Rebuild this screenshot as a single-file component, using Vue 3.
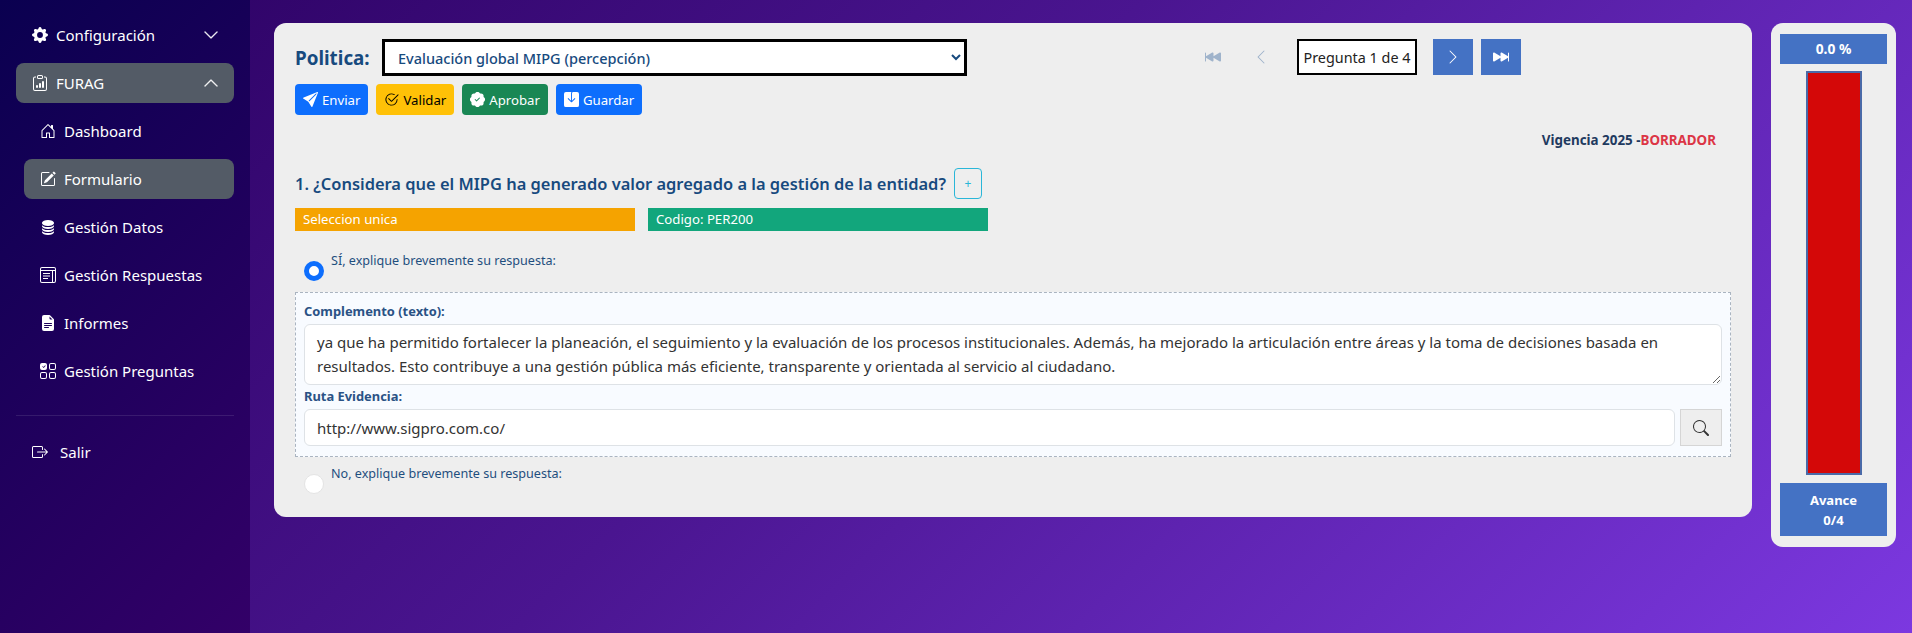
<script setup>
const icons = {
  gear: 'M9.405 1.05c-.413-1.4-2.397-1.4-2.81 0l-.1.34a1.464 1.464 0 0 1-2.105.872l-.31-.17c-1.283-.698-2.686.705-1.987 1.987l.169.311c.446.82.023 1.841-.872 2.105l-.34.1c-1.4.413-1.4 2.397 0 2.81l.34.1a1.464 1.464 0 0 1 .872 2.105l-.17.31c-.698 1.283.705 2.686 1.987 1.987l.311-.169a1.464 1.464 0 0 1 2.105.872l.1.34c.413 1.4 2.397 1.4 2.81 0l.1-.34a1.464 1.464 0 0 1 2.105-.872l.31.17c1.283.698 2.686-.705 1.987-1.987l-.169-.311a1.464 1.464 0 0 1 .872-2.105l.34-.1c1.4-.413 1.4-2.397 0-2.81l-.34-.1a1.464 1.464 0 0 1-.872-2.105l.17-.31c.698-1.283-.705-2.686-1.987-1.987l-.311.169a1.464 1.464 0 0 1-2.105-.872l-.1-.34zM8 10.93a2.929 2.929 0 1 1 0-5.86 2.929 2.929 0 0 1 0 5.858z',
  clip: 'M4 11a1 1 0 1 1 2 0v1a1 1 0 1 1-2 0v-1zm6-4a1 1 0 1 1 2 0v5a1 1 0 1 1-2 0V7zM7 9a1 1 0 0 1 2 0v3a1 1 0 1 1-2 0V9zM4 1.5H3a2 2 0 0 0-2 2V14a2 2 0 0 0 2 2h10a2 2 0 0 0 2-2V3.5a2 2 0 0 0-2-2h-1v1h1a1 1 0 0 1 1 1V14a1 1 0 0 1-1 1H3a1 1 0 0 1-1-1V3.5a1 1 0 0 1 1-1h1v-1zM9.5 1a.5.5 0 0 1 .5.5v1a.5.5 0 0 1-.5.5h-3a.5.5 0 0 1-.5-.5v-1a.5.5 0 0 1 .5-.5h3zm-3-1A1.5 1.5 0 0 0 5 1.5v1A1.5 1.5 0 0 0 6.5 4h3A1.5 1.5 0 0 0 11 2.5v-1A1.5 1.5 0 0 0 9.5 0h-3z',
  house: 'M8.354 1.146a.5.5 0 0 0-.708 0l-6 6A.5.5 0 0 0 1.5 7.5v7a.5.5 0 0 0 .5.5h4.5a.5.5 0 0 0 .5-.5v-4h2v4a.5.5 0 0 0 .5.5H14a.5.5 0 0 0 .5-.5v-7a.5.5 0 0 0-.146-.354L13 5.793V2.5a.5.5 0 0 0-.5-.5h-1a.5.5 0 0 0-.5.5v1.293L8.354 1.146zM2.5 14V7.707l5.5-5.5 5.5 5.5V14H10v-4a.5.5 0 0 0-.5-.5h-3a.5.5 0 0 0-.5.5v4H2.5z',
  pencil: 'M15.502 1.94a.5.5 0 0 1 0 .706L14.459 3.69l-2-2L13.502.646a.5.5 0 0 1 .707 0l1.293 1.293zm-1.75 2.456-2-2L4.939 9.21a.5.5 0 0 0-.121.196l-.805 2.414a.25.25 0 0 0 .316.316l2.414-.805a.5.5 0 0 0 .196-.12l6.813-6.814zM1 13.5A1.5 1.5 0 0 0 2.5 15h11a1.5 1.5 0 0 0 1.5-1.5v-6a.5.5 0 0 0-1 0v6a.5.5 0 0 1-.5.5h-11a.5.5 0 0 1-.5-.5v-11a.5.5 0 0 1 .5-.5H9a.5.5 0 0 0 0-1H2.5A1.5 1.5 0 0 0 1 2.5v11z',
  db: 'M3.904 1.777C4.978 1.289 6.427 1 8 1s3.022.289 4.096.777C13.125 2.245 14 2.993 14 4s-.875 1.755-1.904 2.223C11.022 6.711 9.573 7 8 7s-3.022-.289-4.096-.777C2.875 5.755 2 5.007 2 4s.875-1.755 1.904-2.223ZM2 6.161V7c0 1.007.875 1.755 1.904 2.223C4.978 9.71 6.427 10 8 10s3.022-.289 4.096-.777C13.125 8.755 14 8.007 14 7v-.839c-.457.432-1 .751-1.49.972C11.278 7.693 9.682 8 8 8s-3.278-.307-4.51-.867c-.49-.22-1.033-.54-1.49-.972ZM2 9.161V10c0 1.007.875 1.755 1.904 2.223C4.978 12.711 6.427 13 8 13s3.022-.289 4.096-.777C13.125 11.755 14 11.007 14 10v-.839c-.457.432-1 .751-1.49.972-1.232.56-2.828.867-4.51.867s-3.278-.307-4.51-.867c-.49-.22-1.033-.54-1.49-.972ZM2 12.161V13c0 1.007.875 1.755 1.904 2.223C4.978 15.711 6.427 16 8 16s3.022-.289 4.096-.777C13.125 14.755 14 14.007 14 13v-.839c-.457.432-1 .751-1.49.972-1.232.56-2.828.867-4.51.867s-3.278-.307-4.51-.867c-.49-.22-1.033-.54-1.49-.972Z',
  layout: 'M2 0h12a2 2 0 0 1 2 2v12a2 2 0 0 1-2 2H2a2 2 0 0 1-2-2V2a2 2 0 0 1 2-2zm0 1a1 1 0 0 0-1 1v1h14V2a1 1 0 0 0-1-1H2zM1 4v10a1 1 0 0 0 1 1h10V4H1zm12 0v11h1a1 1 0 0 0 1-1V4h-2zM3 6h7v1H3V6zm0 2.500h7v1H3v-1zM3 11h5v1H3v-1z',
  file: 'M9.293 0H4a2 2 0 0 0-2 2v12a2 2 0 0 0 2 2h8a2 2 0 0 0 2-2V4.707A1 1 0 0 0 13.707 4L10 .293A1 1 0 0 0 9.293 0zM9.500 3.500v-2l3 3h-2a1 1 0 0 1-1-1zM4.500 9a.5.5 0 0 1 0-1h7a.5.5 0 0 1 0 1h-7zM4 10.500a.5.5 0 0 1 .5-.5h7a.5.5 0 0 1 0 1h-7a.5.5 0 0 1-.5-.5zm.5 2.500a.5.5 0 0 1 0-1h4a.5.5 0 0 1 0 1h-4z',
  grid: 'M2 0h3a2 2 0 0 1 2 2v3a2 2 0 0 1-2 2H2a2 2 0 0 1-2-2V2a2 2 0 0 1 2-2zm1.700 5 2-2.300-.6-.5-1.500 1.700-.8-.8-.5.5 1.400 1.400zM11 0h3a2 2 0 0 1 2 2v3a2 2 0 0 1-2 2h-3a2 2 0 0 1-2-2V2a2 2 0 0 1 2-2zm0 1a1 1 0 0 0-1 1v3a1 1 0 0 0 1 1h3a1 1 0 0 0 1-1V2a1 1 0 0 0-1-1h-3zM2 9h3a2 2 0 0 1 2 2v3a2 2 0 0 1-2 2H2a2 2 0 0 1-2-2v-3a2 2 0 0 1 2-2zm0 1a1 1 0 0 0-1 1v3a1 1 0 0 0 1 1h3a1 1 0 0 0 1-1v-3a1 1 0 0 0-1-1H2zm9-1h3a2 2 0 0 1 2 2v3a2 2 0 0 1-2 2h-3a2 2 0 0 1-2-2v-3a2 2 0 0 1 2-2zm0 1a1 1 0 0 0-1 1v3a1 1 0 0 0 1 1h3a1 1 0 0 0 1-1v-3a1 1 0 0 0-1-1h-3z',
  exit: 'M10 12.500a.5.5 0 0 1-.5.5h-8a.5.5 0 0 1-.5-.5v-9a.5.5 0 0 1 .5-.5h8a.5.5 0 0 1 .5.5v2a.5.5 0 0 0 1 0v-2A1.500 1.500 0 0 0 9.500 2h-8A1.500 1.500 0 0 0 0 3.500v9A1.500 1.500 0 0 0 1.500 14h8a1.500 1.500 0 0 0 1.500-1.500v-2a.5.5 0 0 0-1 0v2zM15.854 8.354a.5.5 0 0 0 0-.708l-3-3a.5.5 0 0 0-.708.708L14.293 7.500H5.500a.5.5 0 0 0 0 1h8.793l-2.147 2.146a.5.5 0 0 0 .708.708l3-3z',
  send: 'M15.964.686a.5.5 0 0 0-.65-.65L.767 5.855H.766l-.452.18a.5.5 0 0 0-.082.887l.41.26.001.002 4.995 3.178 3.178 4.995.002.002.26.41a.5.5 0 0 0 .886-.083l6-15Zm-1.833 1.890L6.637 10.070l-.215-.338a.5.5 0 0 0-.154-.154l-.338-.215 7.494-7.494 1.178-.471-.47 1.178Z',
  check: 'M2.500 8a5.500 5.500 0 0 1 8.250-4.764.5.5 0 0 0 .5-.866A6.500 6.500 0 1 0 14.500 8a.5.5 0 0 0-1 0 5.500 5.500 0 1 1-11 0zM15.354 3.354a.5.5 0 0 0-.708-.708L8 9.293 5.354 6.646a.5.5 0 1 0-.708.708l3 3a.5.5 0 0 0 .708 0l7-7z',
  patch: 'M10.067.87a2.89 2.89 0 0 0-4.134 0l-.622.638-.89-.011a2.89 2.89 0 0 0-2.924 2.924l.01.89-.636.622a2.89 2.89 0 0 0 0 4.134l.637.622-.011.89a2.89 2.89 0 0 0 2.924 2.924l.89-.01.622.636a2.89 2.89 0 0 0 4.134 0l.622-.637.89.011a2.89 2.89 0 0 0 2.924-2.924l-.01-.89.636-.622a2.89 2.89 0 0 0 0-4.134l-.637-.622.011-.89a2.89 2.89 0 0 0-2.924-2.924l-.89.01-.622-.636zm.287 5.984-3 3a.5.5 0 0 1-.708 0l-1.500-1.500a.5.5 0 1 1 .708-.708L7 8.793l2.646-2.647a.5.5 0 0 1 .708.708z',
  save: 'M8.500 1.500A1.500 1.500 0 0 1 10 0h4a2 2 0 0 1 2 2v12a2 2 0 0 1-2 2H2a2 2 0 0 1-2-2V2a2 2 0 0 1 2-2h6c-.314.418-.5.937-.5 1.500v7.793L4.854 6.646a.5.5 0 1 0-.708.708l3.500 3.500a.5.5 0 0 0 .708 0l3.500-3.500a.5.5 0 0 0-.708-.708L8.500 9.293V1.500z',
  first: 'M.5 3.500A.5.5 0 0 0 0 4v8a.5.5 0 0 0 1 0V8.753l6.267 3.636c.54.313 1.233-.066 1.233-.697v-2.940l6.267 3.636c.54.314 1.233-.065 1.233-.696V4.308c0-.63-.693-1.010-1.233-.696L8.500 7.248v-2.940c0-.63-.692-1.010-1.233-.696L1 7.248V4a.5.5 0 0 0-.5-.5z',
  last: 'M15.500 3.500a.5.5 0 0 1 .5.5v8a.5.5 0 0 1-1 0V8.753l-6.267 3.636c-.54.313-1.233-.066-1.233-.697v-2.940l-6.267 3.636C.693 12.703 0 12.324 0 11.693V4.308c0-.63.693-1.010 1.233-.696L7.500 7.248v-2.940c0-.63.693-1.010 1.233-.696L15 7.248V4a.5.5 0 0 1 .5-.5z',
  left: 'M11.354 1.646a.5.5 0 0 1 0 .708L5.707 8l5.647 5.646a.5.5 0 0 1-.708.708l-6-6a.5.5 0 0 1 0-.708l6-6a.5.5 0 0 1 .708 0z',
  right: 'M4.646 1.646a.5.5 0 0 1 .708 0l6 6a.5.5 0 0 1 0 .708l-6 6a.5.5 0 0 1-.708-.708L10.293 8 4.646 2.354a.5.5 0 0 1 0-.708z',
  down: 'M1.646 4.646a.5.5 0 0 1 .708 0L8 10.293l5.646-5.647a.5.5 0 0 1 .708.708l-6 6a.5.5 0 0 1-.708 0l-6-6a.5.5 0 0 1 0-.708z',
  up: 'M7.646 4.646a.5.5 0 0 1 .708 0l6 6a.5.5 0 0 1-.708.708L8 5.707l-5.646 5.647a.5.5 0 0 1-.708-.708l6-6z',
  search: 'M11.742 10.344a6.500 6.500 0 1 0-1.397 1.398h-.001c.03.04.062.078.098.115l3.850 3.850a1 1 0 0 0 1.415-1.414l-3.850-3.850a1.007 1.007 0 0 0-.115-.1zM12 6.500a5.500 5.500 0 1 1-11 0 5.500 5.500 0 0 1 11 0z'
}
const subItems = [
  { label: 'Dashboard', icon: 'house' },
  { label: 'Formulario', icon: 'pencil', active: true },
  { label: 'Gestión Datos', icon: 'db' },
  { label: 'Gestión Respuestas', icon: 'layout' },
  { label: 'Informes', icon: 'file' },
  { label: 'Gestión Preguntas', icon: 'grid' }
]
const actions = [
  { label: 'Enviar', icon: 'send', cls: 'blue' },
  { label: 'Validar', icon: 'check', cls: 'yellow' },
  { label: 'Aprobar', icon: 'patch', cls: 'green' },
  { label: 'Guardar', icon: 'save', cls: 'blue' }
]
const complemento = 'ya que ha permitido fortalecer la planeación, el seguimiento y la evaluación de los procesos institucionales. Además, ha mejorado la articulación entre áreas y la toma de decisiones basada en resultados. Esto contribuye a una gestión pública más eficiente, transparente y orientada al servicio al ciudadano.'
</script>

<template>
  <div class="page">
    <aside class="sidebar">
      <nav class="menu">
        <a class="top-item">
          <svg class="ico" viewBox="0 0 16 16"><path :d="icons.gear" /></svg>
          <span>Configuración</span>
          <svg class="chev" viewBox="0 0 16 16"><path :d="icons.down" /></svg>
        </a>
        <a class="top-item open">
          <svg class="ico" viewBox="0 0 16 16"><path :d="icons.clip" /></svg>
          <span>FURAG</span>
          <svg class="chev" viewBox="0 0 16 16"><path :d="icons.up" /></svg>
        </a>
        <a v-for="it in subItems" :key="it.label" class="sub-item" :class="{ active: it.active }">
          <svg class="ico" viewBox="0 0 16 16"><path :d="icons[it.icon]" /></svg>
          <span>{{ it.label }}</span>
        </a>
      </nav>
      <hr class="divider" />
      <a class="logout">
        <svg class="ico" viewBox="0 0 16 16"><path :d="icons.exit" /></svg>
        <span>Salir</span>
      </a>
    </aside>

    <main class="content">
      <section class="card">
        <div class="head-row">
          <div class="head-left">
            <div class="politica">
              <label class="pol-label">Politica:</label>
              <select class="pol-select">
                <option>Evaluación global MIPG (percepción)</option>
              </select>
            </div>
            <div class="actions">
              <button v-for="a in actions" :key="a.label" class="act" :class="a.cls">
                <svg class="act-ico" viewBox="0 0 16 16"><path :d="icons[a.icon]" /></svg>
                {{ a.label }}
              </button>
            </div>
          </div>
          <div class="pager">
            <button class="pg ghost"><svg viewBox="0 0 16 16"><path :d="icons.first" /></svg></button>
            <button class="pg ghost"><svg viewBox="0 0 16 16"><path :d="icons.left" /></svg></button>
            <div class="pg-count">Pregunta 1 de 4</div>
            <button class="pg solid"><svg viewBox="0 0 16 16"><path :d="icons.right" /></svg></button>
            <button class="pg solid"><svg viewBox="0 0 16 16"><path :d="icons.last" /></svg></button>
          </div>
        </div>

        <div class="vigencia">Vigencia 2025 -<span class="borrador">BORRADOR</span></div>

        <div class="question">
          <h2>1. ¿Considera que el MIPG ha generado valor agregado a la gestión de la entidad?</h2>
          <button class="plus">+</button>
        </div>

        <div class="tags">
          <span class="tag orange">Seleccion unica</span>
          <span class="tag teal">Codigo: PER200</span>
        </div>

        <label class="option first">
          <input type="radio" name="r" checked />
          <span>SÍ, explique brevemente su respuesta:</span>
        </label>

        <div class="extra">
          <label class="field-label">Complemento (texto):</label>
          <textarea class="area" :value="complemento"></textarea>
          <label class="field-label second">Ruta Evidencia:</label>
          <div class="evid">
            <input class="url" type="text" value="http://www.sigpro.com.co/" />
            <button class="find"><svg viewBox="0 0 16 16"><path :d="icons.search" /></svg></button>
          </div>
        </div>

        <label class="option">
          <input type="radio" name="r" />
          <span>No, explique brevemente su respuesta:</span>
        </label>
      </section>

      <aside class="progress">
        <div class="pct">0.0 %</div>
        <div class="bar"></div>
        <div class="avance">Avance<br />0/4</div>
      </aside>
    </main>
  </div>
</template>

<style>
body { margin: 0; }
</style>

<style scoped>
.page {
  display: flex;
  min-height: 633px;
  background: linear-gradient(135deg, #2a0060 0%, #4a1590 45%, #7c38e0 100%);
  font-family: "Noto Sans", "Open Sans", sans-serif;
  overflow: hidden;
}
.sidebar {
  width: 250px;
  flex: none;
  box-sizing: border-box;
  padding: 15px 16px 0;
  background: linear-gradient(135deg, #0a0050 0%, #330068 100%);
  color: #fff;
  font-size: 15px;
}
.menu { display: flex; flex-direction: column; gap: 8px; }
.top-item, .sub-item {
  display: flex;
  align-items: center;
  height: 40px;
  border-radius: 8px;
  color: #fff;
}
.top-item { padding: 0 16px; }
.top-item .ico { margin-right: 8px; }
.top-item.open, .sub-item.active { background: #535b66; }
.sub-item { margin-left: 8px; padding: 0 16px; }
.sub-item .ico { margin-right: 8px; }
.ico { width: 16px; height: 16px; fill: currentColor; flex: none; }
.chev { width: 16px; height: 16px; fill: currentColor; margin-left: auto; margin-right: -1px; stroke: currentColor; stroke-width: 0.4; }
.divider {
  border: 0;
  height: 1px;
  background: rgba(255, 255, 255, 0.1);
  margin: 24px 0 15px;
}
.logout { display: flex; align-items: center; height: 42px; padding-left: 16px; gap: 12px; }

.content {
  flex: 1;
  display: flex;
  align-items: flex-start;
  gap: 19px;
  padding: 23px 16px 0 24px;
  min-width: 0;
}
.card {
  flex: 1;
  min-width: 0;
  box-sizing: border-box;
  height: 494px;
  background: #eeeeee;
  border-radius: 12px;
  padding: 16px 21px 0;
}
.head-row { display: flex; justify-content: space-between; }
.head-left { display: flex; flex-direction: column; gap: 8px; }
.politica { display: flex; align-items: center; gap: 13px; }
.pol-label { color: #174a7e; font-size: 18.8px; font-weight: 700; width: 74px; white-space: nowrap; }
.pol-select {
  width: 585px;
  height: 37px;
  box-sizing: border-box;
  border: 3px solid #000;
  background: #fff;
  color: #174a7e;
  font: 500 14.5px "Noto Sans", sans-serif;
  padding-left: 9px;
  border-radius: 0;
}
.actions { display: flex; gap: 8px; }
.act {
  display: inline-flex;
  align-items: center;
  gap: 4px;
  height: 31px;
  box-sizing: border-box;
  padding: 0 8px;
  border: 0;
  border-radius: 4px;
  font: 13.2px "Noto Sans", sans-serif;
  white-space: nowrap;
}
.act-ico { width: 15px; height: 15px; fill: currentColor; }
.act.blue { background: #0d6efd; color: #fff; }
.act.yellow { background: #ffc107; color: #000; }
.act.green { background: #198754; color: #fff; }
.pager { display: flex; align-items: flex-start; gap: 8px; margin-right: 210px; }
.pg {
  width: 40px;
  height: 36px;
  border: 0;
  padding: 0;
  display: flex;
  align-items: center;
  justify-content: center;
}
.pg svg { width: 16px; height: 16px; fill: currentColor; }
.pg.ghost { background: transparent; color: #9fb3cb; }
.pg.solid { background: #4472c4; color: #fff; }
.pg-count {
  box-sizing: border-box;
  width: 120px;
  height: 36px;
  border: 2px solid #000;
  background: #fff;
  color: #222;
  font-size: 14.4px;
  display: flex;
  align-items: center;
  justify-content: center;
  margin: 0 8px 0 8px;
  white-space: nowrap;
}
.vigencia {
  text-align: right;
  color: #1f3a5f;
  font-size: 13.4px;
  font-weight: 700;
  padding-right: 15px;
  margin-top: 17px;
  line-height: 17px;
}
.borrador { color: #dc3545; }
.question { display: flex; align-items: center; gap: 8px; margin-top: 19px; }
.question h2 { margin: 0; color: #174a7e; font-size: 16.45px; font-weight: 600; white-space: nowrap; }
.plus {
  width: 28px;
  height: 31px;
  padding: 0;
  border: 1px solid #29b6d8;
  border-radius: 4px;
  background: transparent;
  color: #29b6d8;
  font: 12px "Noto Sans", sans-serif;
}
.tags { display: flex; gap: 13px; margin-top: 9px; }
.tag {
  width: 340px;
  height: 23px;
  box-sizing: border-box;
  padding-left: 8px;
  color: #fff;
  font-size: 13.2px;
  line-height: 23px;
}
.orange { background: #f5a300; }
.teal { background: #12a67c; }
.option {
  display: flex;
  align-items: flex-start;
  color: #1f4e7e;
  font-size: 12.6px;
  padding-left: 9px;
}
.option.first { margin-top: 21px; height: 40px; }
.option input {
  appearance: none;
  width: 20px;
  height: 20px;
  margin: 9px 7px 0 0;
  border-radius: 50%;
  background: #fff;
  box-sizing: border-box;
  border: 1px solid #e4e4e4;
  flex: none;
}
.option input:checked { border: 5px solid #0d6efd; }
.extra {
  box-sizing: border-box;
  height: 165px;
  border: 1px dashed #aab4c0;
  background: #f8fbff;
  padding: 10px 8px 0;
}
.field-label { display: block; color: #2a5285; font-size: 12.9px; font-weight: 700; line-height: 17px; }
.field-label.second { margin-top: 3px; }
.area {
  display: block;
  width: 100%;
  height: 61px;
  box-sizing: border-box;
  margin-top: 4px;
  padding: 5px 12px;
  border: 1px solid #dee2e6;
  border-radius: 6px;
  background: #fff;
  color: #333;
  font: 15px/24px "Noto Sans", sans-serif;
}
.evid { display: flex; gap: 5px; margin-top: 4px; }
.url {
  flex: 1;
  height: 37px;
  box-sizing: border-box;
  padding: 0 12px;
  border: 1px solid #dee2e6;
  border-radius: 6px;
  background: #fff;
  color: #333;
  font: 15px "Noto Sans", sans-serif;
}
.find {
  width: 42px;
  height: 37px;
  padding: 0;
  border: 1px solid #d5d5d5;
  background: #eeeeee;
  display: flex;
  align-items: center;
  justify-content: center;
}
.find svg { width: 16px; height: 16px; fill: #333; }
.option:last-child { margin-top: 8px; }

.progress {
  width: 125px;
  flex: none;
  box-sizing: border-box;
  height: 524px;
  background: #eeeeee;
  border-radius: 12px;
  padding: 11px 9px;
  display: flex;
  flex-direction: column;
  align-items: center;
}
.pct, .avance {
  width: 107px;
  background: #4472c4;
  color: #fff;
  font-size: 13px;
  font-weight: 700;
  text-align: center;
}
.pct { height: 30px; line-height: 30px; font-size: 13.8px; }
.bar {
  box-sizing: border-box;
  width: 56px;
  height: 404px;
  margin: 7px 0 8px;
  background: #d40808;
  border: 2px solid #4a6aa8;
}
.avance { height: 53px; line-height: 20px; padding-top: 7px; box-sizing: border-box; }
</style>
